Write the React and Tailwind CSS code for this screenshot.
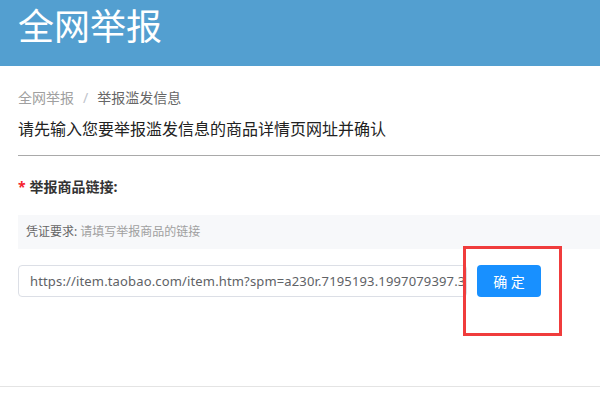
import React from 'react'

export default function App() {
  return (
    <div className="relative w-[600px] h-[400px] overflow-hidden bg-white font-['Noto_Sans','Noto_Sans_CJK_SC',sans-serif]">
      <div className="h-[66px] bg-[#539fd0] pl-[18px] pt-[5px]">
        <h1 className="text-[36px] leading-[44px] text-white">全网举报</h1>
      </div>

      <div className="pl-[18px]">
        <div className="mt-[22px] text-[14px] leading-[20px] flex gap-[9px]">
          <span className="text-[#a0a0a0]">全网举报</span>
          <span className="text-[#c0c4cc]">/</span>
          <span className="text-[#666]">举报滥发信息</span>
        </div>
        <p className="mt-[9px] text-[16px] leading-[24px] text-[#222]">请先输入您要举报滥发信息的商品详情页网址并确认</p>
        <div className="mt-[14px] h-px bg-[#a9a9a9]"></div>

        <div className="mt-[21px] text-[14px] leading-[20px] font-bold text-[#333]">
          <span className="text-[#f5222d] mr-[4px]">*</span>举报商品链接:
        </div>

        <div className="mt-[18px] h-[34px] bg-[#f7f8fa] pl-[8px] text-[12px] leading-[34px]">
          <span className="text-[#666]">凭证要求:</span>
          <span className="text-[#a0a0a0] ml-[3px]">请填写举报商品的链接</span>
        </div>

        <div className="mt-[16px] flex items-center">
          <div className="w-[449px] h-[32px] border border-[#dcdfe6] rounded-[4px] pl-[11px] overflow-hidden whitespace-nowrap text-[13px] leading-[30px] tracking-[0.15px] text-[#606266]">
            https://item.taobao.com/item.htm?spm=a230r.7195193.1997079397.3
          </div>
          <button className="ml-[10px] w-[64px] h-[32px] rounded-[4px] bg-[#1890ff] text-white text-[14px]">
            确 定
          </button>
        </div>
      </div>

      <div className="mt-[89px] h-px bg-[#e4e4e4]"></div>

      <div className="absolute left-[463px] top-[246px] w-[99px] h-[90px] border-[3px] border-[#f03c3c]"></div>
    </div>
  )
}
